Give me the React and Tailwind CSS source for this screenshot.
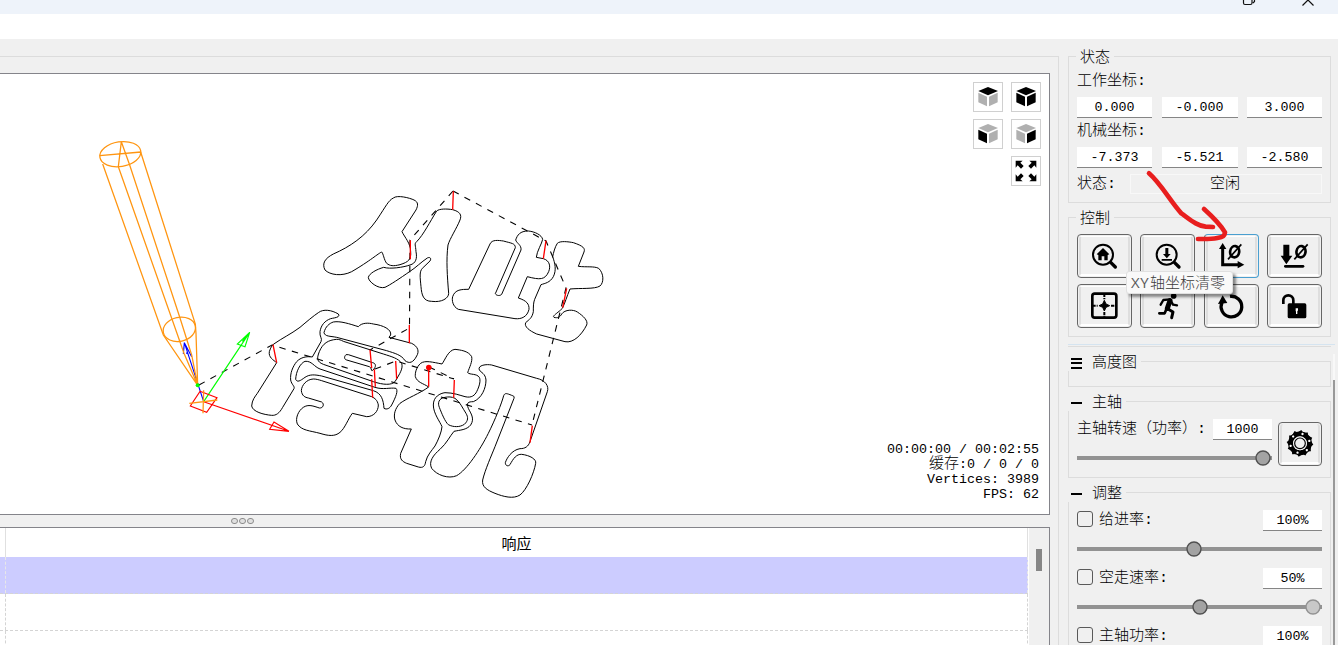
import React from 'react';

const CJK = "font-['Liberation_Mono','Noto_Sans_CJK_SC',monospace]";

const OUTLINES = [
  {
    at: 'translate(310 180) scale(0.33333)',
    d: [
      'M250,54C262,44 300,54 312,60C325,66 325,76 318,90L276,155C284,172 302,190 302,215C304,238 296,246 270,254C250,259 240,258 230,250C222,240 220,220 215,216C205,220 180,243 125,275C95,290 60,285 45,270C35,250 45,235 70,222C120,200 165,170 200,120C230,75 235,62 250,54Z',
      'M380,93C388,86 410,86 428,89C450,95 456,105 450,120C440,145 420,175 414,195C408,240 412,290 416,340C416,355 395,368 365,364C340,364 335,345 333,320C330,290 328,275 337,265L360,243C365,235 360,230 352,234C335,245 315,265 300,274C270,295 240,315 225,322C205,328 175,305 175,292C178,280 200,268 221,262C240,268 280,262 300,255C318,250 322,235 318,215C317,195 312,192 320,185C340,165 360,125 380,93Z',
    ],
    cuts: 'M301,181V238M430,34L428,89',
  },
  {
    at: 'translate(440 180) scale(0.33333)',
    d: [
      'M150,192C156,178 175,181 190,183C215,190 226,190 226,203L166,341C170,348 180,348 185,343L243,210C245,195 230,190 227,180C232,165 240,153 265,153C285,155 305,165 308,178C306,190 290,215 289,232L310,236C330,242 332,260 326,275C315,300 300,300 262,290L235,354C260,362 268,372 267,388C262,410 245,418 225,416L55,388C38,380 35,360 38,350C45,328 65,328 86,328Z',
      'M352,190C360,182 385,185 400,188C430,198 436,205 432,216L415,259C440,262 462,258 476,265C492,280 492,308 480,318C465,328 420,324 390,327C380,350 375,370 367,385C355,398 335,408 342,412C352,415 360,412 365,402C375,388 400,388 412,396C430,408 445,422 440,435C425,465 400,490 375,485L290,462C268,452 252,440 257,428C268,418 276,415 280,395C280,380 280,368 284,358L303,314C315,310 330,308 340,290C350,270 345,250 338,230C340,220 345,200 352,190Z',
    ],
    cuts: 'M318,182L310,236M380,325L368,383',
  },
  {
    at: 'translate(240 300) scale(0.33333)',
    d: [
      'M235,38C250,26 275,30 295,42C302,52 285,53 272,56C255,62 243,75 240,95C238,110 248,115 243,125L217,171C200,168 182,172 170,185C158,200 150,220 152,240C155,255 165,258 162,266L128,322C118,340 108,347 95,346C70,344 38,335 35,318C36,300 45,290 52,280L110,188C100,180 85,172 88,155C92,142 96,137 100,133C130,112 150,104 180,82C200,65 220,48 235,38Z',
      'M280,66C300,62 330,72 355,80C365,68 385,68 400,72C430,76 455,88 452,105L447,112L515,130C535,140 538,155 530,168C520,188 508,192 495,182C485,165 465,160 440,152L290,112C270,108 255,110 252,98C256,80 268,70 280,66Z',
      'M290,118C265,120 248,130 238,155C230,175 230,185 250,193L400,245C430,255 455,256 465,245C480,220 490,205 485,190C475,175 455,170 430,162L310,124C303,120 297,118 290,118Z',
      'M318,164C312,170 312,178 320,180L388,200C396,203 393,217 398,211C410,200 408,190 398,188L325,164Z',
      'M195,184C180,190 168,215 167,238C172,248 180,243 195,232C210,222 225,224 245,228L400,272C425,280 430,300 432,325C440,330 450,325 455,315C468,290 475,272 468,265C450,262 430,270 405,262L240,207C222,200 215,182 195,184Z',
      'M220,237C200,238 185,255 184,272C186,288 195,292 205,294L245,306C254,312 250,325 238,324C220,318 205,312 190,322C175,332 165,355 172,372C185,392 210,392 240,400C265,408 285,410 300,397C315,385 325,355 337,340L380,350C400,350 415,335 415,315C412,300 405,295 395,290L245,242C235,239 228,237 220,237Z',
    ],
    cuts: 'M99,134L110,188M390,149L395,204M403,208L406,260M395,238L398,293M467,183L470,237M508,75V130',
  },
  {
    at: 'translate(380 330) scale(0.33333)',
    d: [
      'M186,102C160,97 135,90 122,100C108,112 105,130 106,140C112,158 130,160 146,171C120,190 80,205 60,220C45,235 40,255 45,270C52,290 70,298 94,297L62,370C58,388 68,395 80,400L115,411C130,415 135,408 137,395C142,375 155,362 165,348C175,330 185,305 186,290C180,275 160,250 160,225C160,200 180,190 195,188C220,188 240,196 255,200C275,205 285,195 290,185C300,165 302,150 298,142C290,130 270,135 263,128C268,112 278,95 275,80C265,62 240,60 225,58C205,60 195,90 186,102Z',
      'M195,202C175,205 173,220 178,232C185,250 195,275 205,284C220,292 240,292 253,283C265,272 265,262 258,250C248,235 240,215 225,205C215,200 205,200 195,202Z',
      'M298,120C292,105 320,102 335,105L470,145C495,150 508,168 502,185L450,335C445,350 435,356 420,356C395,360 380,385 376,398C376,408 385,410 390,404C400,385 410,372 425,373C450,376 470,388 467,400C462,430 440,480 420,495C400,508 370,500 345,490C320,480 305,470 308,450C315,420 335,375 345,350L402,205C404,198 400,198 395,196C380,190 375,188 371,197C365,220 345,270 325,310C300,360 260,420 230,437C205,448 170,435 155,415C145,395 160,375 180,358C200,340 210,318 222,304C240,300 260,300 272,285C285,265 272,250 265,235C258,218 265,215 280,215C305,205 318,175 318,150C316,130 303,128 298,120Z',
    ],
    cuts: 'M146,115V170M223,150L221,203M457,287L450,338',
  },
];

function Toolpath() {
  return (
    <svg className="absolute inset-0 h-full w-full" viewBox="0 74 1049 440" fill="none">
      {OUTLINES.map((g) => (
        <g key={g.at} transform={g.at}>
          {g.d.map((d) => (
            <path key={d} d={d} stroke="#000" strokeWidth="3" />
          ))}
        </g>
      ))}
      <g stroke="#000" strokeWidth="1.100" strokeDasharray="6.500 6.500">
        <path d="M199,385L272,345L532,425" />
        <path d="M453,191L410,240L409.5,328L370,350" />
        <path d="M453,191L546,241L566,288L532,425" />
        <path d="M375,369L396,361L454,379M429,367L454,379" />
      </g>
      {OUTLINES.map((g) => (
        <g key={g.at} transform={g.at}>
          <path d={g.cuts} stroke="#f00" strokeWidth="4" />
        </g>
      ))}
      <circle cx="428.8" cy="367.6" r="2.8" fill="#f00" />
      <g transform="translate(80 120) scale(0.33333)" strokeWidth="3.4">
        <path stroke="#00f" d="M371,845L313,668L310,702M313,668L335,710M322,694L320,702" />
        <path stroke="#0f0" d="M371,845L509,637L472,672L495,680L509,637L487,664" />
        <path stroke="#f00" d="M371,845L627,934L582,906L569,928L627,934M360,814L411,833L380,877L331,858Z" />
        <g stroke="#ff9510" strokeWidth="3.800">
          <ellipse cx="121" cy="102.500" rx="62" ry="37" transform="rotate(-9 121 102.500)" />
          <ellipse cx="298" cy="628" rx="49" ry="36" transform="rotate(-12 298 628)" />
          <path d="M59,107L183,96M124,65L115,140M68,132L250,645L353,796M115,140L312,700L353,796M124,65L149,135L300,594L335,705L353,796M182,96L346,612L348,640L353,796" />
          <path d="M328,850L412,840M371,811L369,880" />
        </g>
        <circle cx="353" cy="796" r="6" fill="#0f0" />
      </g>
    </svg>
  );
}

function Cube({ top, left, right }) {
  return (
    <svg viewBox="0 0 90 90" className="h-[30px] w-[30px] shrink-0">
      <path d="M45,15L75,27L45,40L16,27Z" fill={top} />
      <path d="M16,32L42,44V73L16,61Z" fill={left} />
      <path d="M48,44L74,32V61L48,73Z" fill={right} />
    </svg>
  );
}

function ViewButton({ children, className = '' }) {
  return (
    <div className={`flex h-[30px] w-[30px] items-center justify-center border border-[#d0d0d0] bg-white ${className}`}>
      {children}
    </div>
  );
}

const CORNER = 'M14,14H35L28,20L38,30L30,38L20,28L14,35Z';

function ViewButtons() {
  const g = '#b0b0b0';
  const k = '#000';
  return (
    <div className="absolute top-2 right-2 grid grid-cols-2 gap-x-2 gap-y-[7px]">
      <ViewButton><Cube top={k} left={g} right={g} /></ViewButton>
      <ViewButton><Cube top={k} left={k} right={k} /></ViewButton>
      <ViewButton><Cube top={g} left={k} right={g} /></ViewButton>
      <ViewButton><Cube top={g} left={g} right={k} /></ViewButton>
      <ViewButton className="col-start-2">
        <svg viewBox="0 0 90 90" className="h-[30px] w-[30px] shrink-0">
          <path d={CORNER} />
          <path d={CORNER} transform="translate(90 0) scale(-1 1)" />
          <path d={CORNER} transform="translate(0 90) scale(1 -1)" />
          <path d={CORNER} transform="translate(90 90) scale(-1 -1)" />
        </svg>
      </ViewButton>
    </div>
  );
}

const ICONS = {
  home: (
    <>
      <circle cx="78" cy="62" r="30" fill="none" stroke="#000" strokeWidth="6" />
      <path d="M101,85L115,99" stroke="#000" strokeWidth="10" strokeLinecap="round" />
      <path d="M78,42L59,61L64,63V79H74V67H82V79H92V63L97,61Z" />
    </>
  ),
  probe: (
    <>
      <circle cx="80" cy="62" r="30" fill="none" stroke="#000" strokeWidth="6" />
      <path d="M103,85L117,99" stroke="#000" strokeWidth="10" strokeLinecap="round" />
      <path d="M76,42H85V60H92L80.500,73L69,60H76ZM65,75H96V80H65Z" />
    </>
  ),
  zeroXY: (
    <>
      <path d="M56,40V92H104" fill="none" stroke="#000" strokeWidth="9" />
      <path d="M56,27L67,45H45ZM121,92L101,81V103Z" />
      <ellipse cx="92" cy="53" rx="13.500" ry="17" fill="none" stroke="#000" strokeWidth="8" transform="rotate(10 92 53)" />
      <path d="M112,31L72,76" stroke="#000" strokeWidth="5" />
    </>
  ),
  zeroZ: (
    <>
      <path d="M49,32H67V65H76L58,91L41,65H49Z" />
      <ellipse cx="102" cy="53" rx="13.500" ry="17" fill="none" stroke="#000" strokeWidth="8" transform="rotate(10 102 53)" />
      <path d="M122,31L82,76" stroke="#000" strokeWidth="5" />
      <path d="M55,97H108" stroke="#000" strokeWidth="8" strokeLinecap="round" />
    </>
  ),
  center: (
    <>
      <rect x="46" y="29" width="72" height="72" rx="7" fill="none" stroke="#000" strokeWidth="8" />
      <path d="M82,29V46M82,84V101M46,65H62M102,65H118" stroke="#000" strokeWidth="6" strokeDasharray="10 3" />
      <path d="M82,49L87,60L98,65L87,70L82,81L77,70L66,65L77,60Z" stroke="#000" strokeWidth="3" />
    </>
  ),
  run: (
    <>
      <circle cx="101" cy="36" r="8.500" />
      <g fill="none" stroke="#000" strokeLinecap="round" strokeLinejoin="round">
        <path d="M90,50L82,73" strokeWidth="15" />
        <path d="M62,62L70,48L90,46L99,62L111,64" strokeWidth="7" />
        <path d="M84,75L99,84L95,101" strokeWidth="9" />
        <path d="M79,76L74,88L58,88" strokeWidth="8" />
      </g>
    </>
  ),
  reset: (
    <>
      <path d="M78,37A31,31 0 1 1 54,55" fill="none" stroke="#000" strokeWidth="10" />
      <path d="M56,34L70,57L42,60Z" />
    </>
  ),
  unlock: (
    <>
      <path d="M49,60V49A15,15 0 0 1 79,49V60" fill="none" stroke="#000" strokeWidth="8" />
      <rect x="62" y="58" width="56" height="45" rx="5" />
      <path d="M86,73H93V80H91V90H87V82H86Z" fill="#fff" />
    </>
  ),
};

function ControlButton({ icon, active }) {
  return (
    <button
      className={`flex h-11 w-[55px] rounded-[4px] border bg-[#f0f0f0] p-px ${
        active ? 'border-[#4a9fd0] border-l-[#666]' : 'border-[#666]'
      }`}
    >
      <span className="flex h-full w-full items-center justify-center rounded-[3px] border-r-2 border-b-2 border-l-2 border-t border-t-white border-r-[#dedede] border-b-white border-l-[#dedede]">
        <svg viewBox="0 0 165 132" className="h-11 w-[55px] shrink-0">{ICONS[icon]}</svg>
      </span>
    </button>
  );
}

function Group({ title, className, children }) {
  return (
    <section className={`shrink-0 border border-[#dcdcdc] pr-[8px] pl-2 ${className}`}>
      <h2 className="-mt-2 ml-[-1px] flex h-4 w-[38px] items-center justify-center bg-[#f0f0f0] pt-[3px] text-[15px] leading-4 font-light whitespace-nowrap">{title}</h2>
      {children}
    </section>
  );
}

function FoldGroup({ title, open, className, titleClass, children }) {
  return (
    <section className={`shrink-0 border border-[#dcdcdc] ${className}`}>
      <h2 className={`-mt-[9px] -ml-px flex h-[18px] items-center gap-[10px] bg-[#f0f0f0] pl-[3px] text-[15px] leading-[18px] font-light whitespace-nowrap ${titleClass}`}>
        <span className="mt-[2px] flex w-[11px] flex-col gap-[2.5px]">
          <i className="h-[2px] bg-black" />
          {!open && <i className="h-[2px] bg-black" />}
          {!open && <i className="h-[2px] bg-black" />}
        </span>
        <span className="pt-[4px]">{title}</span>
      </h2>
      {children}
    </section>
  );
}

function Field({ value, className = '' }) {
  return (
    <div className={`flex h-[21px] items-center justify-center border-b border-[#858585] bg-white pt-px text-[13.33px] leading-none ${className}`}>
      {value}
    </div>
  );
}

function Slider({ knobs, width, className = '' }) {
  return (
    <svg className={className} width={width} height="16" viewBox={`0 0 ${width} 16`}>
      <rect x="0" y="6" width={width} height="4" fill="#929292" />
      {knobs.map((k) => (
        <circle key={k.x} cx={k.x} cy="8" r="7" fill={k.faded ? '#c8c8c8' : '#a3a3a3'} stroke={k.faded ? '#929292' : '#505050'} strokeWidth="1.400" />
      ))}
    </svg>
  );
}

function Override({ label, value, knobs }) {
  return (
    <div className="h-[58px]">
      <div className="flex h-[21px] items-center">
        <span className="mt-[-3px] h-4 w-4 rounded-[3px] border border-[#5a5a5a]" />
        <span className="ml-[6px] flex-1 pt-px text-[15px] leading-5 font-light">{label}</span>
        <Field value={value} className="w-[59px]" />
      </div>
      <Slider knobs={knobs} width={245} className="mt-[10px] block" />
    </div>
  );
}

function SpindleIcon() {
  const teeth = Array.from({ length: 12 }, (_, i) => i * 30);
  return (
    <svg viewBox="0 0 132 132" className="h-11 w-11 shrink-0">
      <circle cx="66" cy="67" r="28" fill="none" stroke="#000" strokeWidth="15" />
      {teeth.map((a) => (
        <g key={a} transform={`rotate(${a} 66 67)`}>
          <path d="M56,36L70,27L77,37Z" />
        </g>
      ))}
      {teeth.filter((a) => a % 60 === 0).map((a) => (
        <circle key={a} cx="66" cy="38" r="3.500" fill="#fff" transform={`rotate(${a + 15} 66 67)`} />
      ))}
      <circle cx="66" cy="67" r="21" fill="#f0f0f0" />
      <circle cx="66" cy="67" r="16" fill="#f0f0f0" stroke="#000" strokeWidth="3.500" />
    </svg>
  );
}

function SidePanel() {
  return (
    <aside className="ml-[9px] flex w-[263px] shrink-0 flex-col pt-[17px]">
      <Group title="状态" className="h-[147px]">
        <p className="h-8 text-[15px] leading-[33px] font-light">工作坐标:</p>
        <div className="flex justify-between">
          <Field value="0.000" className="w-[75px]" />
          <Field value="-0.000" className="w-[76px]" />
          <Field value="3.000" className="w-[75px]" />
        </div>
        <p className="h-[29px] text-[15px] leading-[27px] font-light">机械坐标:</p>
        <div className="flex justify-between">
          <Field value="-7.373" className="w-[75px]" />
          <Field value="-5.521" className="w-[76px]" />
          <Field value="-2.580" className="w-[75px]" />
        </div>
        <div className="mt-[6px] flex h-5 items-center text-[15px] font-light">
          <span className="w-[53px] pt-[3px]">状态:</span>
          <span className="flex h-5 flex-1 items-center justify-center border border-[#f8f8f8] pt-[3px] pr-[2px]">空闲</span>
        </div>
      </Group>

      <Group title="控制" className="mt-[14px] h-[120px]">
        <div className="mt-2 grid w-[245px] grid-cols-[repeat(4,55px)] justify-between gap-y-[6px]">
          <ControlButton icon="home" />
          <ControlButton icon="probe" />
          <ControlButton icon="zeroXY" active />
          <ControlButton icon="zeroZ" />
          <ControlButton icon="center" />
          <ControlButton icon="run" />
          <ControlButton icon="reset" />
          <ControlButton icon="unlock" />
        </div>
      </Group>

      <div className="mt-[7px] -mr-1 h-px shrink-0 bg-[#d5e4f0]" />
      <div className="mt-px h-px shrink-0 bg-[#dcdcdc]" />

      <FoldGroup title="高度图" className="mt-[14px] h-[26px]" titleClass="w-[73px]" />

      <FoldGroup title="主轴" open className="mt-[14px] h-[77px]" titleClass="w-[58px]">
        <div className="mt-[8px] flex justify-between pr-2 pl-2">
          <div className="w-[195px]">
            <div className="flex h-[21px] items-center justify-between">
              <span className="pt-px text-[15px] leading-5 font-light whitespace-nowrap">主轴转速（功率）:</span>
              <Field value="1000" className="w-[59px] shrink-0" />
            </div>
            <Slider knobs={[{ x: 186 }]} width={195} className="mt-[10px] block" />
          </div>
          <button className="mt-[3px] flex h-11 w-11 rounded-[4px] border border-[#666] p-px">
            <span className="flex h-full w-full items-center justify-center rounded-[3px] border-r-2 border-b-2 border-l-2 border-r-[#dedede] border-b-white border-l-[#dedede]">
              <SpindleIcon />
            </span>
          </button>
        </div>
      </FoldGroup>

      <FoldGroup title="调整" open className="mt-[14px] h-[220px]" titleClass="w-[58px]">
        <div className="mt-2 pr-2 pl-2">
          <Override label="给进率:" value="100%" knobs={[{ x: 117 }]} />
          <Override label="空走速率:" value="50%" knobs={[{ x: 236, faded: true }, { x: 123 }]} />
          <Override label="主轴功率:" value="100%" knobs={[{ x: 117 }]} />
        </div>
      </FoldGroup>
    </aside>
  );
}

function Console() {
  return (
    <div className="flex h-[118px] w-[1050px] shrink-0 border-t border-r border-[#84848a] bg-white">
      <div className="flex flex-1 flex-col">
        <div className="flex h-[29px] shrink-0">
          <div className="w-[6px] border-r border-[#e0e0e0]" />
          <div className="flex flex-1 items-center justify-center border-r border-[#e0e0e0] pt-px font-['Noto_Sans_CJK_SC',sans-serif] text-[15px]">响应</div>
        </div>
        <div className="flex h-[37px] shrink-0 border-b border-dashed border-[#d4d4d4] bg-[#ccccff]">
          <div className="w-[6px] border-r border-dashed border-[#e8e8e8]" />
          <div className="flex-1 border-r border-dashed border-[#e8e8e8]" />
        </div>
        {[0, 1].map((r) => (
          <div key={r} className="flex h-[37px] shrink-0 border-b border-dashed border-[#d4d4d4]">
            <div className="w-[6px] border-r border-dashed border-[#d4d4d4]" />
            <div className="flex-1 border-r border-dashed border-[#d4d4d4]" />
          </div>
        ))}
      </div>
      <div className="ml-px flex w-5 bg-[#f0f0f0] pt-[21px] pl-[7px]">
        <span className="h-[22px] w-[6px] bg-[#868686]" />
      </div>
    </div>
  );
}

export default function App() {
  return (
    <div className={`relative flex h-[645px] w-[1338px] flex-col overflow-hidden bg-[#f0f0f0] text-black ${CJK}`}>
      <header className="flex h-[14px] shrink-0 justify-end bg-[#eef3fa]">
        <svg width="100" height="14" viewBox="1238 0 100 14" fill="none" stroke="#111" strokeWidth="1.200">
          <path d="M1243.500,0V3Q1243.500,4.500 1245,4.500H1250.500Q1252,4.500 1252,3V0M1254.500,0V1.500L1253,3M1302.500,5.500L1308,0L1313.500,5.500" />
        </svg>
      </header>
      <div className="h-[25px] shrink-0 bg-white" />

      <main className="flex min-h-0 flex-1">
        <div className="flex w-[1059px] shrink-0 flex-col pt-[17px]">
          <div className="flex flex-1 flex-col border-t border-r border-[#dcdcdc] pt-4">
            <div className="relative h-[442px] w-[1050px] shrink-0 border-y border-r border-[#84848a] bg-white">
              <Toolpath />
              <ViewButtons />
              <div className="absolute right-[10px] bottom-[12px] text-right text-[13.33px] leading-[15px] whitespace-pre">
                <div>00:00:00 / 00:02:55</div>
                <div className="h-[15px]"><span className="text-[15px] font-light">缓存</span>:0 / 0 / 0</div>
                <div>Vertices: 3989</div>
                <div>FPS: 62</div>
              </div>
            </div>
            <div className="flex h-3 shrink-0 items-center gap-[1.500px] pl-[231px]">
              {[0, 1, 2].map((i) => (
                <i key={i} className="h-[6.500px] w-[6.500px] rounded-full border border-[#8c8c8c] bg-[#e0e0e0]" />
              ))}
            </div>
            <Console />
          </div>
        </div>
        <SidePanel />
        <div className="ml-[2px] flex w-[2px] flex-col pt-[315px]">
          <i className="h-[26px] bg-[#f8f8f8]" />
          <i className="flex-1 bg-[#999]" />
        </div>
      </main>

      <div className="absolute top-[271px] left-[1126px] flex h-[23px] w-[107px] items-center rounded-[3px] border border-[#e0e0e0] bg-[#f9f9f9] pl-1 font-['Open_Sans','Noto_Sans_CJK_SC',sans-serif] text-[15px] font-normal whitespace-nowrap text-[#5a5a5a] shadow-[3px_3px_3px_rgba(0,0,0,0.45)]">
        <span className="w-[19px] tracking-[0.5px]">XY</span>
        <span className="font-light text-[#3c3c3c]">轴坐标清零</span>
      </div>

      <svg className="absolute top-[160px] left-[1064px] h-[100px] w-[180px]" viewBox="0 0 540 300" fill="none" stroke="#e81e1e" strokeWidth="14" strokeLinecap="round" strokeLinejoin="round">
        <path d="M255,40C290,70 320,125 352,160C380,180 400,198 425,200L447,201M420,147C440,165 470,195 483,217C482,228 478,230 460,234C440,238 420,237 402,237" />
      </svg>
    </div>
  );
}
